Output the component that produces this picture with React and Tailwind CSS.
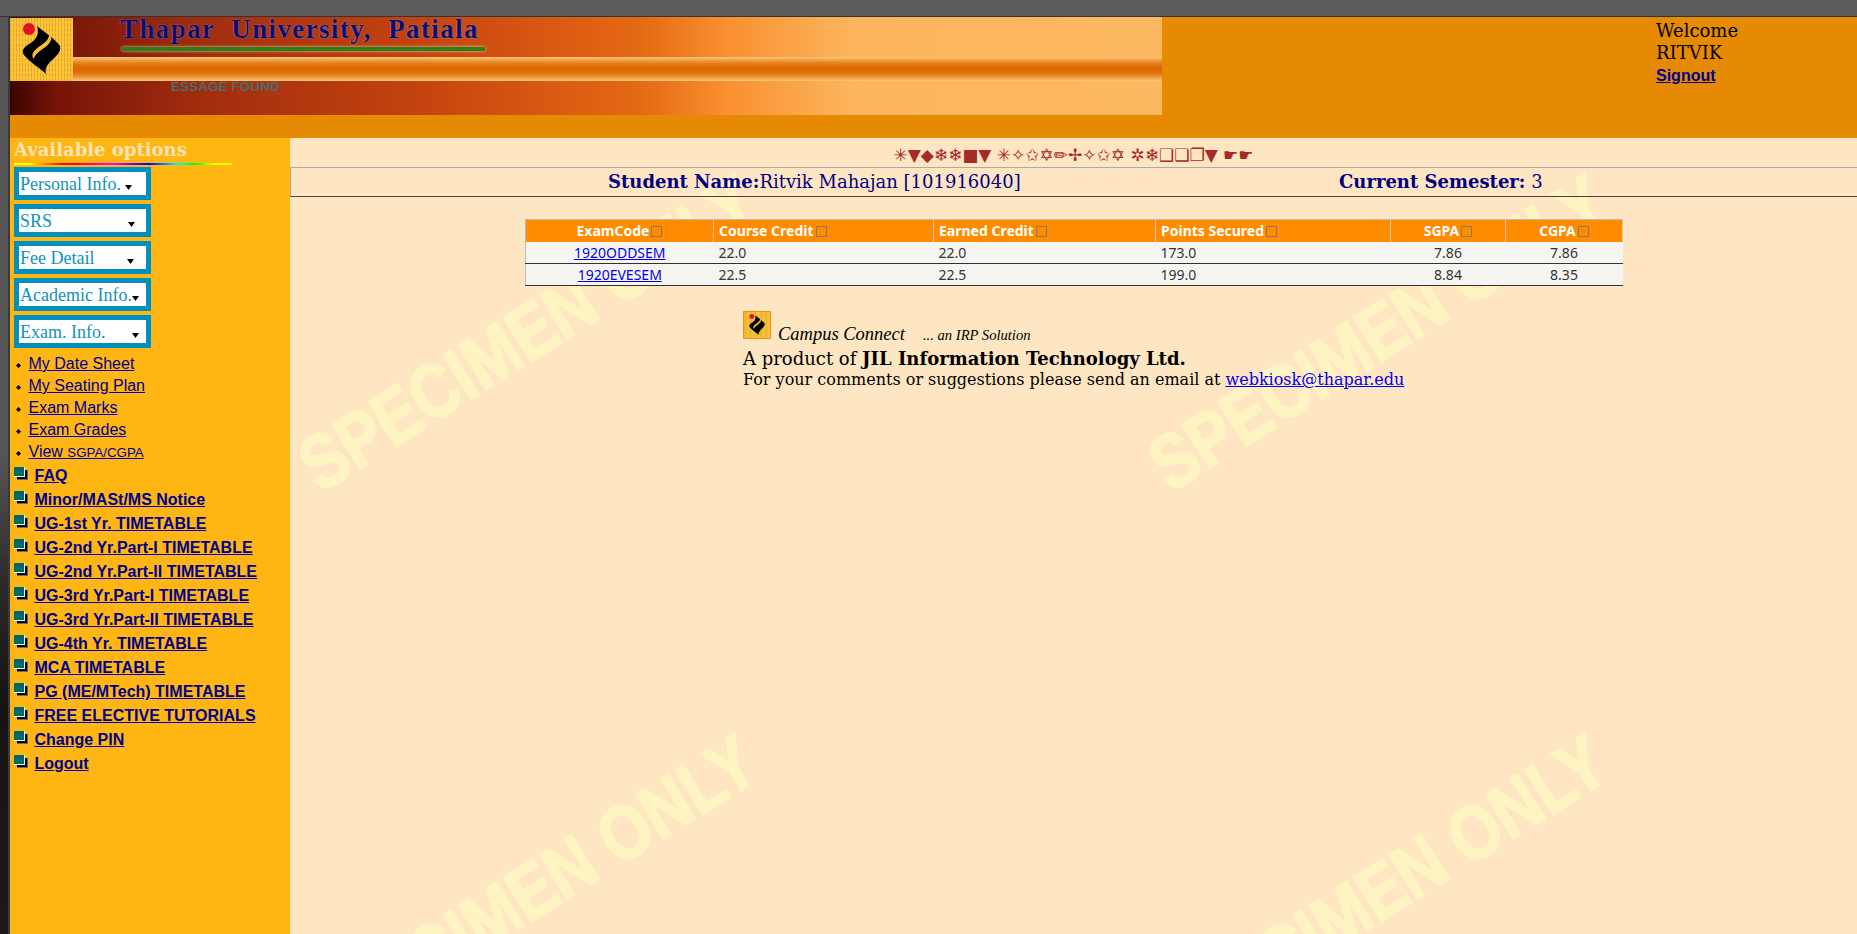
const menus = [
  { label: 'Personal Info.', arrow: 'mr-[14px]' },
  { label: 'SRS', arrow: 'mr-[11px]' },
  { label: 'Fee Detail', arrow: 'mr-[12px]' },
  { label: 'Academic Info.', arrow: 'mr-[7px]' },
  { label: 'Exam. Info.', arrow: 'mr-[7px]' },
];

const examLinks = ['My Date Sheet', 'My Seating Plan', 'Exam Marks', 'Exam Grades'];

const mainLinks = [
  'FAQ',
  'Minor/MASt/MS Notice',
  'UG-1st Yr. TIMETABLE',
  'UG-2nd Yr.Part-I TIMETABLE',
  'UG-2nd Yr.Part-II TIMETABLE',
  'UG-3rd Yr.Part-I TIMETABLE',
  'UG-3rd Yr.Part-II TIMETABLE',
  'UG-4th Yr. TIMETABLE',
  'MCA TIMETABLE',
  'PG (ME/MTech) TIMETABLE',
  'FREE ELECTIVE TUTORIALS',
  'Change PIN',
  'Logout',
];

const columns = [
  { name: 'ExamCode', width: 'w-[188px]', head: 'text-center' },
  { name: 'Course Credit', width: 'w-[220px]', head: 'text-left pl-[5px]' },
  { name: 'Earned Credit', width: 'w-[222px]', head: 'text-left pl-[5px]' },
  { name: 'Points Secured', width: 'w-[235px]', head: 'text-left pl-[5px]' },
  { name: 'SGPA', width: 'w-[115px]', head: 'text-center' },
  { name: 'CGPA', width: 'w-[117px]', head: 'text-center' },
];

const rows = [
  ['1920ODDSEM', '22.0', '22.0', '173.0', '7.86', '7.86'],
  ['1920EVESEM', '22.5', '22.5', '199.0', '8.84', '8.35'],
];

function Logo({ className }) {
  return (
    <svg viewBox="0 0 63 63" className={className}>
      <defs>
        <pattern id="logo-dots" width="3" height="5" patternUnits="userSpaceOnUse">
          <rect width="3" height="5" fill="#fcc436" />
          <rect width="1" height="4" fill="#e0a52c" />
        </pattern>
      </defs>
      <rect width="63" height="63" fill="url(#logo-dots)" />
      <circle cx="19" cy="11" r="6" fill="#e0122a" />
      <path d="M27 8C34 14 44 20 50 28C52 34 44 40 40 44C36 48 35 52 36 56C30 50 22 46 14 37C11 33 14 29 19 26C26 22 30 16 27 8Z" fill="#000" />
      <path d="M39 15C44 20 40 26 34 30C28 34 24 38 24 41C20 37 24 32 30 28C36 24 40 20 39 15Z" fill="#fdbb33" />
    </svg>
  );
}

function Arrow({ className }) {
  return (
    <svg viewBox="0 0 7 5" className={`w-[7px] h-[5px] mt-[7px] shrink-0 ${className}`}>
      <path d="M0 0H7L3.5 5Z" fill="#000" />
    </svg>
  );
}

function Diamond() {
  return (
    <svg viewBox="0 0 5 5" className="w-[5px] h-[5px] mt-[3px] shrink-0">
      <path d="M2.5 0L5 2.5L2.5 5L0 2.5Z" fill="#000" />
    </svg>
  );
}

function SquareBullet() {
  return (
    <svg viewBox="0 0 14 13" className="w-[14px] h-[13px] shrink-0 mb-[5px]">
      <rect x="3" y="3" width="11" height="10" fill="#666" />
      <rect x="3" y="3" width="10" height="9" fill="#000" />
      <rect x="0" y="0" width="11" height="10" fill="#fff" />
      <rect x="0" y="0" width="10" height="9" fill="#006a6a" />
    </svg>
  );
}

function SortIcon() {
  return <span className="inline-block w-[11px] h-[11px] ml-[2px] align-[-1px] border border-[#8a7a60]" />;
}

function Watermark({ className }) {
  return (
    <div className={`absolute w-[700px] text-center font-bold text-[76px] leading-none whitespace-nowrap text-[#fef4c2] [-webkit-text-stroke:2px_#fef4c2] font-['Liberation_Sans',sans-serif] rotate-[-32deg] scale-x-[0.84] ${className}`}>
      SPECIMEN ONLY
    </div>
  );
}

export default function App() {
  return (
    <div className="h-screen w-full overflow-hidden flex flex-col bg-[#5b5b5b]">
      <div className="h-[17px] shrink-0 bg-[#5b5b5b] border-b border-[#333]" />

      <div className="flex-1 flex min-h-0">
        <div className="w-[10px] shrink-0 border-r-2 border-[#3a3a3a] bg-[linear-gradient(180deg,#555_0,#555_48%,#2a2a2a_62%,#161412_75%,#1e1816_100%)]" />

        <div className="flex-1 flex flex-col min-w-0">
          {/* Header */}
          <div className="h-[121px] shrink-0 bg-[#e68a04] flex">
            <div className="relative w-[1152px] h-[98px] shrink-0 flex flex-col bg-[linear-gradient(90deg,#3a0500_0,#761407_4%,#a02c0e_16%,#c5440f_36%,#e56a14_55%,#f98f30_62%,#fcb55c_73%,#fcb860_100%)]">
              <Logo className="absolute left-0 top-[1px] w-[63px] h-[63px]" />
              <div className="h-[40px] pl-[110px]">
                <div className="w-[362px] text-[27px] leading-[24px] font-bold whitespace-pre tracking-[1.4px] text-[#0c0c6e] font-['Liberation_Serif',serif] [text-shadow:0_0_1px_#c8b8e8]">
                  {'Thapar  University,  Patiala'}
                </div>
                <div className="w-[363px] h-[4px] mt-[6px] ml-[2px] bg-[#2a8018] shadow-[0_0_3px_#f8d8a0]" />
              </div>
              <div className="h-[24px] ml-[63px] bg-[linear-gradient(180deg,#fdc878_0,#f2a24a_12%,#e07810_30%,#de6400_50%,#e07810_70%,#f2a24a_88%,#fdc878_100%)]" />
              <div className="pl-[161px] -mt-[2px] text-[13.6px] leading-[15px] font-bold text-[#4f6a6a] font-['Liberation_Sans',sans-serif]">
                ESSAGE FOUND
              </div>
            </div>
            <div className="pl-[494px] pt-[3px] font-['DejaVu_Serif',serif] text-[18px] leading-[22px] text-black">
              <div>Welcome</div>
              <div>RITVIK</div>
              <a href="#" className="block mt-[1px] text-[16px] font-bold text-[#00008b] underline font-['Liberation_Sans',sans-serif]">Signout</a>
            </div>
          </div>

          <div className="flex-1 flex min-h-0">
            {/* Sidebar */}
            <div className="w-[280px] shrink-0 bg-[#ffb512] pl-[4px] font-['Liberation_Sans',sans-serif] text-[16px]">
              <div className="h-[25px] text-[18px] leading-[23px] font-bold text-[#ffe4b8] font-['DejaVu_Serif',serif]">Available options</div>
              <div className="w-[218px] h-[2px] mb-[2px] bg-[linear-gradient(90deg,#ffff00_0,#ffff00_7%,#ffb512_11%,#ff0000_22%,#ff00ff_45%,#0000ff_62%,#00ffff_75%,#00ff00_83%,#ffff00_92%,#ffff00_100%)]" />

              <div className="flex flex-col gap-[4px]">
                {menus.map((menu) => (
                  <div key={menu.label} className="w-[137px] h-[33px] border-[5px] border-[#0090bf] bg-white pl-[1px] flex items-center justify-between">
                    <span className="text-[18px] leading-[22px] text-[#0f92c0] font-['Liberation_Serif',serif] whitespace-nowrap">{menu.label}</span>
                    <Arrow className={menu.arrow} />
                  </div>
                ))}
              </div>

              <ul className="mt-[5px]">
                {examLinks.map((item) => (
                  <li key={item} className="h-[22px] flex items-center pl-[2px] gap-[7.5px]">
                    <Diamond />
                    <a href="#" className="text-[#00008b] underline decoration-[#0000cc]">{item}</a>
                  </li>
                ))}
                <li className="h-[22px] flex items-center pl-[2px] gap-[7.5px]">
                  <Diamond />
                  <a href="#" className="text-[#00008b] underline decoration-[#0000cc]">View <span className="text-[13.3px]">SGPA/CGPA</span></a>
                </li>
              </ul>

              <ul className="mt-[1px]">
                {mainLinks.map((item) => (
                  <li key={item} className="h-[24px] flex items-center gap-[6.5px]">
                    <SquareBullet />
                    <a href="#" className="font-bold whitespace-nowrap text-[#00008b] underline decoration-[#0000cc]">{item}</a>
                  </li>
                ))}
              </ul>
            </div>

            {/* Main */}
            <div className="relative flex-1 min-w-0 overflow-hidden bg-[#ffe6c3] font-['DejaVu_Serif',serif]">
              <Watermark className="left-[-112px] top-[157px]" />
              <Watermark className="left-[738px] top-[157px]" />
              <Watermark className="left-[-112px] top-[717px]" />
              <Watermark className="left-[738px] top-[717px]" />

              <div className="relative">
                <div className="h-[29px] pt-[5px] flex items-center justify-center text-[17px] leading-none text-[#a52a2a] font-['DejaVu_Sans',sans-serif] whitespace-nowrap">
                  ✳▼◆❄❄■▼ ✳✧✩✡✏✢✧✩✡ ✲❄❑❏❐▼ ☛☛
                </div>

                <div className="h-[30px] pb-[2px] flex items-center border-t border-l border-t-[#aaa] border-l-[#aaa] border-b border-b-[#444] pl-[317px] text-[18px] text-[#000080] whitespace-nowrap">
                  <span className="w-[731px]"><b>Student Name:</b>Ritvik Mahajan [101916040]</span>
                  <span><b>Current Semester:</b> 3</span>
                </div>

                <table className="ml-[235px] mt-[22px] w-[1097px] table-fixed border-collapse text-[14px] font-['Noto_Sans',sans-serif]">
                  <thead>
                    <tr className="h-[22px] bg-[#ff8c00] text-white border-t border-l border-[#bbb]">
                      {columns.map((col) => (
                        <th key={col.name} className={`${col.width} ${col.head} p-0 font-bold border-r border-[#d8c8a8] leading-none`}>
                          {col.name}<SortIcon />
                        </th>
                      ))}
                    </tr>
                  </thead>
                  <tbody>
                    {rows.map((row) => (
                      <tr key={row[0]} className="h-[22px] bg-[#f6f5f2] text-[#333] border-l border-l-[#bbb] border-b border-b-[#2d3436]">
                        <td className="p-0 text-center"><a href="#" className="text-[#0000ee] underline">{row[0]}</a></td>
                        <td className="p-0 pl-[5px]">{row[1]}</td>
                        <td className="p-0 pl-[5px]">{row[2]}</td>
                        <td className="p-0 pl-[5px]">{row[3]}</td>
                        <td className="p-0 text-center">{row[4]}</td>
                        <td className="p-0 text-center">{row[5]}</td>
                      </tr>
                    ))}
                  </tbody>
                </table>

                <div className="ml-[453px] mt-[25px] text-black">
                  <div className="flex items-start h-[29px] font-['Liberation_Serif',serif] italic">
                    <Logo className="w-[28px] h-[28px] border border-[#f09020]" />
                    <span className="ml-[7px] mt-[12px] text-[18.5px] leading-[22px]">Campus Connect</span>
                    <span className="ml-[18px] mt-[14px] text-[14.6px] leading-[20px]">... an IRP Solution</span>
                  </div>
                  <div className="mt-[7px] text-[18px] leading-[24px]">A product of <b>JIL Information Technology Ltd.</b></div>
                  <div className="text-[16px] leading-[18px]">For your comments or suggestions please send an email at <a href="#" className="text-[#0000ee] underline">webkiosk@thapar.edu</a></div>
                </div>
              </div>
            </div>
          </div>
        </div>
      </div>
    </div>
  );
}
